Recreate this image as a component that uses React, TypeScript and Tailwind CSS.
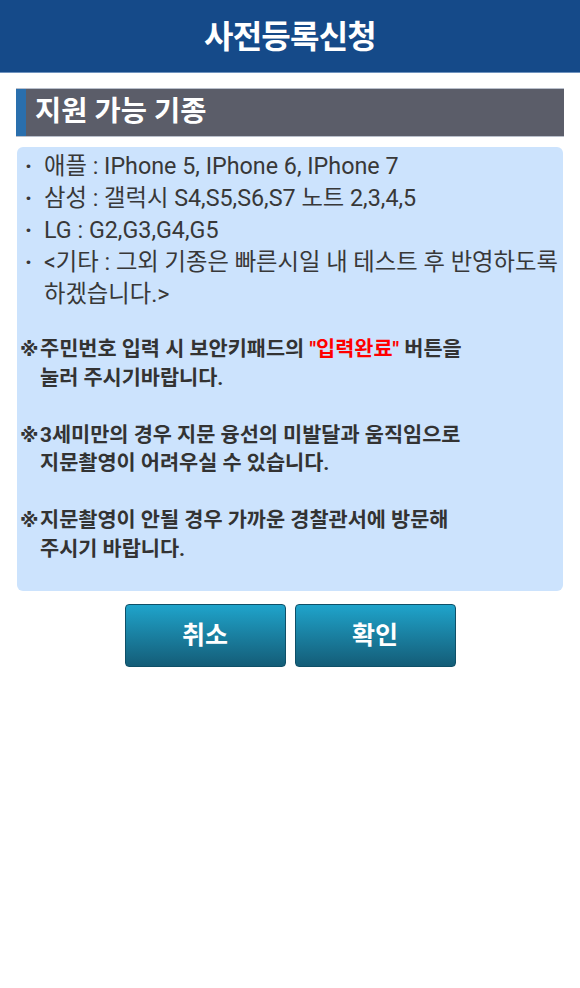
import React from "react";

const FONT = { fontFamily: 'Roboto, "Noto Sans CJK KR", sans-serif' };

const devices = [
  "애플 : IPhone 5, IPhone 6, IPhone 7",
  "삼성 : 갤럭시 S4,S5,S6,S7 노트 2,3,4,5",
  "LG : G2,G3,G4,G5",
];

function Note({ children }: { children: React.ReactNode }) {
  return (
    <div className="flex font-bold text-[20.8px] leading-[28.5px] text-[#333333] whitespace-nowrap">
      <span
        className="w-[23px] shrink-0 pl-[3px] text-[19px] font-bold"
        style={{ fontFamily: '"DejaVu Sans", sans-serif' }}
      >
        ※
      </span>
      <div>{children}</div>
    </div>
  );
}

export default function App() {
  return (
    <div className="min-h-screen bg-white" style={FONT}>
      {/* Header */}
      <header className="h-[73px] bg-[#154a89] border-b border-[#6f93bf] flex items-center justify-center">
        <h1 className="mt-[2px] text-white text-[32px] font-bold tracking-tight">사전등록신청</h1>
      </header>

      <main className="px-4">
        {/* Section title */}
        <div className="mt-[15px] h-[49px] flex border-y border-[#b9bfcb] bg-[#5b5d69]">
          <div className="w-[10px] bg-[#2a6fad]" />
          <h2 className="pl-[9px] flex items-center text-white text-[28.5px] font-bold">지원 가능 기종</h2>
        </div>

        {/* Info box */}
        <section className="mt-[10px] mx-px rounded-md bg-[#cce3fd] pt-[3px] pb-[28px]">
          <ul className="text-[23.3px] leading-[32px] text-[#383838] whitespace-nowrap">
            {devices.map((d) => (
              <li key={d} className="flex">
                <span className="w-[27px] shrink-0 pl-[8px] font-bold">·</span>
                <span>{d}</span>
              </li>
            ))}
            <li className="flex">
              <span className="w-[27px] shrink-0 pl-[8px] font-bold">·</span>
              <span>
                &lt;기타 : 그외 기종은 빠른시일 내 테스트 후 반영하도록
                <br />
                하겠습니다.&gt;
              </span>
            </li>
          </ul>

          <div className="mt-[25px] flex flex-col gap-[28.5px]">
            <Note>
              주민번호 입력 시 보안키패드의 <span className="text-[#ff0000]">"입력완료"</span> 버튼을
              <br />
              눌러 주시기바랍니다.
            </Note>
            <Note>
              3세미만의 경우 지문 융선의 미발달과 움직임으로
              <br />
              지문촬영이 어려우실 수 있습니다.
            </Note>
            <Note>
              지문촬영이 안될 경우 가까운 경찰관서에 방문해
              <br />
              주시기 바랍니다.
            </Note>
          </div>
        </section>

        {/* Buttons */}
        <div className="mt-[13px] flex justify-center gap-[9px]">
          <button className="w-[161px] h-[63px] rounded-[4px] border border-[#0f5068] bg-gradient-to-b from-[#1fa4cb] to-[#145d78] text-white text-[25px] font-bold">
            취소
          </button>
          <button className="w-[161px] h-[63px] rounded-[4px] border border-[#0f5068] bg-gradient-to-b from-[#1fa4cb] to-[#145d78] text-white text-[25px] font-bold">
            확인
          </button>
        </div>
      </main>
    </div>
  );
}
